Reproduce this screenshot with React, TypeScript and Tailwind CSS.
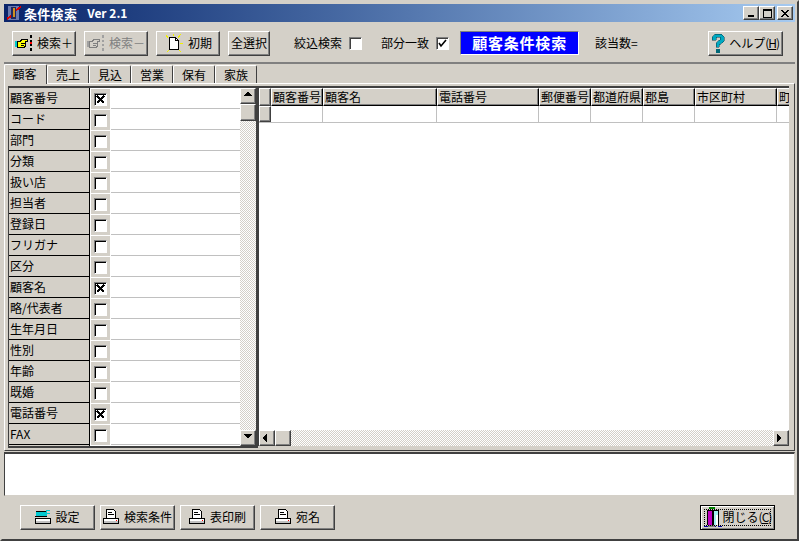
const FONT = 'font-["Noto_Sans_CJK_JP","Liberation_Sans",sans-serif]';
const raised = 'border border-t-white border-l-white border-r-[#404040] border-b-[#404040] shadow-[inset_-1px_-1px_0_#808080]';
const track = 'bg-[repeating-conic-gradient(#ffffff_0_25%,#d4d0c8_0_50%)] bg-[length:2px_2px]';

const rows = [
  { label: '顧客番号', on: true },
  { label: 'コード' },
  { label: '部門' },
  { label: '分類' },
  { label: '扱い店' },
  { label: '担当者' },
  { label: '登録日' },
  { label: 'フリガナ' },
  { label: '区分' },
  { label: '顧客名', on: true },
  { label: '略/代表者' },
  { label: '生年月日' },
  { label: '性別' },
  { label: '年齢' },
  { label: '既婚' },
  { label: '電話番号', on: true },
  { label: 'FAX' },
  { label: '' },
];

const columns = [
  { label: '顧客番号', w: 'w-[52px]' },
  { label: '顧客名', w: 'w-[114px]' },
  { label: '電話番号', w: 'w-[102px]' },
  { label: '郵便番号', w: 'w-[52px]' },
  { label: '都道府県', w: 'w-[52px]' },
  { label: '郡島', w: 'w-[52px]' },
  { label: '市区町村', w: 'w-[82px]' },
  { label: '町', w: 'w-[14px]' },
];

const tabs = ['売上', '見込', '営業', '保有', '家族'];

function Hand({ gray }: { gray?: boolean }) {
  return (
    <svg width="18" height="16" viewBox="0 0 18 16" shapeRendering="crispEdges">
      <path d="M0 6h2v6H0z" fill={gray ? '#a0a0a0' : '#00c8c8'} />
      <path d="M2.5 6.5h3l1-2h6v2h-2v5h-1v1h-7z" fill={gray ? '#d4d0c8' : '#ffff00'} stroke={gray ? '#808080' : '#000'} />
      <path d="M6 8h4M6 10h3" stroke={gray ? '#808080' : '#000'} />
      <path d="M15 0h2v3h-2zM15 5h2v2h-2zM15 9h2v2h-2zM15 13h2v3h-2z" fill={gray ? '#a0a0a0' : '#000'} />
      {!gray && <path d="M15 7h2v2h-2z" fill="#ff0000" />}
    </svg>
  );
}

function NewDoc() {
  return (
    <svg width="20" height="19" viewBox="0 0 20 19" shapeRendering="crispEdges">
      <path d="M2 1l2 3M17 0l-3 4M19 9h-3M3 18l2-2M17 18l-2-2M9 0v2" stroke="#f0f000" />
      <path d="M5.5 3.5h6l3 3v9h-9z" fill="#fff" stroke="#000" />
      <path d="M11.5 3.5v3h3" fill="none" stroke="#000" />
    </svg>
  );
}

function Help() {
  return (
    <svg width="14" height="19" viewBox="0 0 14 19" shapeRendering="crispEdges">
      <path d="M1 6V3l3-3h6l3 3v4l-2 2-3 2v2H5V9l2-2 2-1V3H6L5 6z" fill="#00a8c0" stroke="#003848" strokeWidth="0.5" />
      <path d="M5 15h4v4H5z" fill="#006878" />
    </svg>
  );
}

function Printer() {
  return (
    <svg width="17" height="16" viewBox="0 0 17 16" shapeRendering="crispEdges">
      <path d="M3.5 .5h7l2 2v7h-9z" fill="#fff" stroke="#000" />
      <path d="M5 3h4M5 5h6" stroke="#000" />
      <path d="M.5 9.5h15v5H.5z" fill="#fff" stroke="#000" />
      <path d="M1 12h14v2H1z" fill="#c0c0c0" />
      <path d="M13 11h1v1h-1z" fill="#ff0000" />
    </svg>
  );
}

function Tool() {
  return (
    <svg width="16" height="16" viewBox="0 0 16 16" shapeRendering="crispEdges">
      <path d="M1 3h10V1h4v1h-3v2h3v1h-3v2H1z" fill="#00c8d0" />
      <path d="M1 2.5h10M0 7.5h12" stroke="#000" />
      <path d="M.5 9.5h15v5H.5z" fill="#fff" stroke="#000" />
      <path d="M1 12h14v2H1z" fill="#c0c0c0" />
    </svg>
  );
}

function Door() {
  return (
    <svg width="18" height="21" viewBox="0 0 18 21" shapeRendering="crispEdges">
      <path d="M5 0h6v2H5z" fill="#008000" />
      <path d="M3 3h12v15H3z" fill="#000" />
      <path d="M4 4h4v14H4z" fill="#c000c0" />
      <path d="M10 4h4v14h-4z" fill="#a0f0f0" />
      <path d="M12 8h2v10h-2z" fill="#fff" />
      <path d="M0 19h4M6 19h6M14 19h4" stroke="#0000a0" />
      <path d="M4 18h7v2H4z" fill="#808080" />
    </svg>
  );
}

function ArrowIcon({ dir }: { dir: 'up' | 'down' | 'left' | 'right' }) {
  const d = {
    up: 'M4 0h1v1h1v1h1v1h1v1H0V3h1V2h1V1h1V0z',
    down: 'M0 0h8v1H7v1H6v1H5v1H3V3H2V2H1V1H0z',
    left: 'M4 0v8H3V7H2V6H1V5H0V3h1V2h1V1h1V0z',
    right: 'M0 0h1v1h1v1h1v1h1v2H3v1H2v1H1v1H0z',
  }[dir];
  return (
    <svg width="8" height="8" viewBox="0 0 8 8" shapeRendering="crispEdges">
      <path d={d} fill="#000" />
    </svg>
  );
}

function ScrollButton({ dir }: { dir: 'up' | 'down' | 'left' | 'right' }) {
  return (
    <div className={`w-4 h-4 shrink-0 bg-[#d4d0c8] flex items-center justify-center ${raised}`}>
      <ArrowIcon dir={dir} />
    </div>
  );
}

function Check({ on, mark = 'x', flat }: { on?: boolean; mark?: 'x' | 'v'; flat?: boolean }) {
  return (
    <div className={`w-[13px] h-[13px] bg-white flex items-center justify-center border ${flat ? 'border-t-[#808080] border-l-[#808080] border-r-white border-b-white shadow-[inset_1px_1px_0_#404040]' : 'border-t-[#808080] border-l-[#808080] border-r-white border-b-white shadow-[inset_1px_1px_0_#000]'}`}>
      {on && (
        <svg width="9" height="9" viewBox="0 0 9 9" shapeRendering="crispEdges">
          {mark === 'x' ? (
            <path d="M1 1l7 7M8 1L1 8" stroke="#000" strokeWidth="2" />
          ) : (
            <path d="M1 4l2 3 5-6" fill="none" stroke="#000" strokeWidth="1.6" shapeRendering="auto" />
          )}
        </svg>
      )}
    </div>
  );
}

function ToolButton({ children, w, disabled }: { children: React.ReactNode; w: string; disabled?: boolean }) {
  return (
    <button className={`${w} h-[25px] bg-[#d4d0c8] flex items-center justify-center gap-1 text-[12px] ${disabled ? 'text-[#808080]' : 'text-black'} ${raised}`}>
      {children}
    </button>
  );
}

export default function App() {
  return (
    <div className={`w-[799px] h-[541px] bg-[#d4d0c8] flex flex-col overflow-hidden border-y-2 border-x-2 border-t-[#d4d0c8] border-l-[#d4d0c8] border-r-[#404040] border-b-[#404040] p-[2px] ${FONT}`}>
      <header className="h-[18px] shrink-0 flex items-center justify-between pl-[2px] pr-[2px] bg-gradient-to-r from-[#0a246a] to-[#a6caf0]">
        <div className="flex items-center gap-[2px]">
          <svg width="16" height="16" viewBox="0 0 16 16" shapeRendering="crispEdges">
            <path d="M2 1h11v14H2z" fill="#6a7ab0" />
            <path d="M5 2h5v12H5z" fill="#202860" />
            <path d="M7 3h2v9H7z" fill="#d09020" />
            <path d="M1 14l4-3M10 5l5-3" stroke="#e00000" strokeWidth="2" />
          </svg>
          <span className="text-[13px] font-bold text-white leading-none tracking-[0.3px]">条件検索</span>
          <span className="ml-[8px] text-[12px] font-bold text-white leading-none">Ver 2.1</span>
        </div>
        <div className="flex items-center">
          <button className={`w-4 h-[14px] bg-[#d4d0c8] flex items-end justify-center pb-[2px] ${raised}`}>
            <span className="block w-[6px] h-[2px] bg-black" />
          </button>
          <button className={`w-4 h-[14px] bg-[#d4d0c8] flex items-center justify-center ${raised}`}>
            <span className="block w-[9px] h-[9px] border border-t-2 border-black" />
          </button>
          <button className={`ml-[2px] w-4 h-[14px] bg-[#d4d0c8] flex items-center justify-center ${raised}`}>
            <svg width="8" height="7" viewBox="0 0 8 7" shapeRendering="crispEdges">
              <path d="M0 0h2v1h1v1h2V1h1V0h2v1H7v1H6v1H5v1h1v1h1v1h1v1H6V6H5V5H3v1H2v1H0V6h1V5h1V4h1V3H2V2H1V1H0z" fill="#000" />
            </svg>
          </button>
        </div>
      </header>

      <div className="h-[41px] shrink-0 flex items-center pl-2 pt-[1px] border-b-2 border-b-[#808080] mt-[1px]">
        <div className="flex gap-2">
          <ToolButton w="w-[64px]"><Hand /><span>検索＋</span></ToolButton>
          <ToolButton w="w-[64px]" disabled><Hand gray /><span>検索－</span></ToolButton>
          <ToolButton w="w-[64px]"><NewDoc /><span>初期</span></ToolButton>
          <ToolButton w="w-[42px]"><span>全選択</span></ToolButton>
        </div>
        <span className="ml-[24px] text-[12px] text-black">絞込検索</span>
        <div className="ml-[7px]"><Check flat /></div>
        <span className="ml-[19px] text-[12px] text-black">部分一致</span>
        <div className="ml-[7px]"><Check flat on mark="v" /></div>
        <div className="ml-[11px] w-[119px] h-[24px] bg-[#0000ff] border border-t-[#808080] border-l-[#808080] border-r-white border-b-white flex items-center justify-center text-white text-[15px] font-bold tracking-[0.8px]">
          顧客条件検索
        </div>
        <span className="ml-[16px] text-[12px] text-black">該当数=</span>
        <div className="ml-[70px]">
          <ToolButton w="w-[75px]">
            <Help />
            <span className="whitespace-nowrap">ヘルプ<span className="tracking-[-1px]">(<span className="underline">H</span>)</span></span>
          </ToolButton>
        </div>
      </div>

      <div className="h-[19px] shrink-0 flex items-end text-[12px] text-black">
        <div className="h-[20px] w-[43px] -mb-[1px] relative z-10 bg-[#d4d0c8] border-t border-l border-r border-t-white border-l-white border-r-[#404040] rounded-t-[2px] flex items-center justify-center pb-[2px] pr-[2px]">顧客</div>
        {tabs.map((tab) => (
          <div key={tab} className="h-[18px] w-[42px] bg-[#d4d0c8] border-t border-l border-r border-t-white border-l-white border-r-[#404040] rounded-t-[2px] flex items-center justify-center">{tab}</div>
        ))}
      </div>

      <div className="h-[368px] shrink-0 flex items-start pt-[2px] pl-[3px] pr-[5px] border border-t-white border-l-white border-r-[#404040] border-b-[#404040]">
        <div className="w-[250px] h-[362px] shrink-0 bg-white border-t-2 border-l border-r-2 border-b-2 border-[#404040] flex overflow-hidden">
          <div className="flex-1 min-w-0 overflow-hidden">
            {rows.map((row, i) => (
              <div key={i} className="h-[21px] flex border-b border-b-[#c0c0c0]">
                <div className="w-[81px] shrink-0 bg-[#d4d0c8] border-r border-b border-black -mb-[1px] pl-[1px] text-[12px] leading-[19px] text-black truncate">{row.label}</div>
                <div className="w-[21px] shrink-0 bg-[#d4d0c8] border-l border-t border-l-white border-t-white border-r border-r-white -mb-[1px] flex items-center justify-center">
                  <Check on={row.on} />
                </div>
              </div>
            ))}
          </div>
          <div className={`w-4 shrink-0 flex flex-col ${track}`}>
            <ScrollButton dir="up" />
            <div className={`w-4 h-[17px] shrink-0 bg-[#d4d0c8] ${raised}`} />
            <div className="flex-1" />
            <ScrollButton dir="down" />
          </div>
        </div>

        <div className="flex-1 min-w-0 h-[360px] flex flex-col border-t-2 border-l border-[#404040] bg-white overflow-hidden">
          <div className="flex-1 min-h-0 overflow-hidden">
            <div className="flex h-[18px] w-[540px]">
              <div className={`w-[12px] shrink-0 bg-[#d4d0c8] ${raised}`} />
              {columns.map((col) => (
                <div key={col.label} className={`${col.w} shrink-0 bg-[#d4d0c8] pl-[1px] text-[12px] leading-[15px] text-black overflow-hidden whitespace-nowrap ${raised} border-r-black border-b-black`}>{col.label}</div>
              ))}
            </div>
            <div className="flex h-[17px] w-[540px] border-b border-b-[#c0c0c0]">
              <div className={`w-[12px] shrink-0 bg-[#d4d0c8] ${raised}`} />
              {columns.map((col) => (
                <div key={col.label} className={`${col.w} shrink-0 border-r border-r-[#c0c0c0]`} />
              ))}
            </div>
          </div>
          <div className={`h-4 shrink-0 flex ${track}`}>
            <ScrollButton dir="left" />
            <div className={`w-[16px] h-4 shrink-0 bg-[#d4d0c8] ${raised}`} />
            <div className="flex-1" />
            <ScrollButton dir="right" />
          </div>
        </div>
      </div>

      <div className="h-[44px] shrink-0 bg-white mt-[1px] border-t-2 border-l border-t-[#404040] border-l-[#404040] border-b border-r border-b-[#d4d0c8] border-r-[#d4d0c8]" />

      <div className="flex-1 flex items-center pl-4 pr-[20px] pt-[1px]">
        <div className="flex gap-[5px]">
          <ToolButton w="w-[75px]"><Tool /><span>設定</span></ToolButton>
          <ToolButton w="w-[75px]"><Printer /><span>検索条件</span></ToolButton>
          <ToolButton w="w-[75px]"><Printer /><span>表印刷</span></ToolButton>
          <ToolButton w="w-[75px]"><Printer /><span>宛名</span></ToolButton>
        </div>
        <button className="ml-auto w-[75px] h-[25px] bg-[#d4d0c8] border border-black shadow-[inset_1px_1px_0_#fff,inset_-1px_-1px_0_#808080] flex items-center justify-center relative text-[12px] text-black gap-[1px]">
          <span className="absolute inset-[3px] border border-dotted border-black" />
          <Door />
          <span className="whitespace-nowrap">閉じる<span className="tracking-[-1px]">(<span className="underline">C</span>)</span></span>
        </button>
      </div>
    </div>
  );
}
